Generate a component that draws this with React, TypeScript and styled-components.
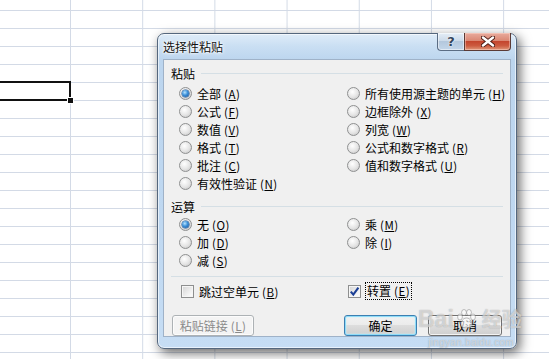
import styled, { createGlobalStyle } from "styled-components";

const GlobalStyle = createGlobalStyle`
    html, body {
        margin: 0;
        padding: 0;
        width: 549px;
        height: 359px;
        overflow: hidden;
    }
    body {
        font-family: "Noto Sans CJK SC", "Liberation Sans", sans-serif;
        font-size: 12px;
        color: #000;
    }
`;

const Sheet = styled.div`
    position: relative;
    width: 549px;
    height: 359px;
    background-color: #fff;
    background-image: linear-gradient(to bottom, #d3dae6 1px, transparent 1px),
        linear-gradient(to right, #d3dae6 1px, transparent 1px);
    background-size: 72.2px 18px;
    background-position: 70px 10px;
    overflow: hidden;
`;

const SelectedCell = styled.div`
    position: absolute;
    left: -3px;
    top: 81px;
    width: 74px;
    height: 20px;
    box-sizing: border-box;
    border: 2px solid #111;

    &::after {
        content: "";
        position: absolute;
        right: -5px;
        bottom: -5px;
        width: 5px;
        height: 5px;
        background: #111;
        border: 1px solid #fff;
    }
`;

const Dialog = styled.div`
    position: absolute;
    left: 157px;
    top: 33px;
    width: 360px;
    height: 316px;
    box-sizing: border-box;
    border: 1px solid #55677d;
    border-radius: 7px;
    background: linear-gradient(
        to bottom,
        #dfecf8 0,
        #cadff3 12px,
        #bcd5ee 26px,
        #bfd8f1 60%,
        #c6ddf4 100%
    );
    box-shadow: 3px 4px 12px rgba(0, 0, 0, 0.6), inset 0 0 0 1px rgba(255, 255, 255, 0.6);
    display: flex;
    flex-direction: column;
`;

const TitleBar = styled.div`
    height: 26px;
    display: flex;
    align-items: flex-start;
    padding-left: 5px;
`;

const Title = styled.div`
    line-height: 25px;
    font-size: 12px;
    color: #111;
    text-shadow: 0 0 5px #fff, 0 0 3px #fff, 0 0 2px #fff;
`;

const CaptionButtons = styled.div`
    margin-left: auto;
    margin-right: 5px;
    margin-top: -1px;
    display: flex;
`;

const HelpButton = styled.div`
    width: 27px;
    height: 18px;
    box-sizing: border-box;
    border: 1px solid #5b6d84;
    border-top: none;
    border-right: none;
    border-radius: 0 0 0 4px;
    background: linear-gradient(to bottom, #e4edf6 0, #cddbea 45%, #b4c8dd 50%, #c3d6ea 100%);
    box-shadow: inset 0 0 0 1px rgba(255, 255, 255, 0.5);
    display: flex;
    align-items: center;
    justify-content: center;
    font-family: "DejaVu Sans", sans-serif;
    font-weight: bold;
    font-size: 13px;
    color: #34465c;
    text-shadow: 0 0 2px #fff, 0 0 1px #fff;
`;

const CloseButton = styled.div`
    width: 47px;
    height: 18px;
    box-sizing: border-box;
    border: 1px solid #5b3a35;
    border-top: none;
    border-radius: 0 0 4px 0;
    background: linear-gradient(
        to bottom,
        #e9ab9d 0,
        #da8874 45%,
        #c4462e 50%,
        #cc5a3f 75%,
        #e09a7c 100%
    );
    box-shadow: inset 0 0 0 1px rgba(255, 220, 210, 0.45);
    display: flex;
    align-items: center;
    justify-content: center;
`;

const Content = styled.div`
    flex: 1;
    margin: 0 5px 11px 5px;
    border: 1px solid #9fb2c8;
    background: #f0f0f0;
    padding: 4px 7px 0 7px;
    display: flex;
    flex-direction: column;
`;

const GroupHeader = styled.div<{ $mt?: number }>`
    height: 18px;
    display: flex;
    align-items: center;
    margin-top: ${(p) => p.$mt ?? 0}px;
`;

const GroupLine = styled.div`
    flex: 1;
    height: 1px;
    margin-left: 6px;
    background: #d5dfe5;
`;

const OptionGrid = styled.div<{ $rows: number; $mt?: number }>`
    display: grid;
    grid-template-columns: 168px 1fr;
    grid-template-rows: repeat(${(p) => p.$rows}, 18px);
    grid-auto-flow: column;
    padding-left: 8px;
    margin-top: ${(p) => p.$mt ?? 0}px;
`;

const Option = styled.div`
    display: flex;
    align-items: center;
    gap: 5px;
    white-space: nowrap;
`;

const Radio = styled.span<{ $checked?: boolean }>`
    position: relative;
    width: 13px;
    height: 13px;
    box-sizing: border-box;
    border-radius: 50%;
    border: 1px solid #8f9091;
    background: radial-gradient(circle at 40% 35%, #ffffff 0, #e4e4e4 55%, #cfcfcf 80%, #eeeeee 100%);
    flex-shrink: 0;

    &::after {
        content: "";
        display: ${(p) => (p.$checked ? "block" : "none")};
        position: absolute;
        left: 2px;
        top: 2px;
        width: 7px;
        height: 7px;
        border-radius: 50%;
        background: radial-gradient(circle at 40% 35%, #b8e4ff 0, #3b8fd8 45%, #1a4f92 100%);
        box-shadow: 0 0 0 0.5px #1d4f88;
    }
`;

const Key = styled.span`
    font-size: 11.5px;
    margin-left: 3px;
    letter-spacing: 0.5px;

    u {
        text-underline-offset: 1px;
    }
`;

const Separator = styled.div`
    height: 1px;
    margin-top: 7px;
    background: #d5dfe5;
`;

const CheckGrid = styled.div`
    display: grid;
    grid-template-columns: 167px 1fr;
    height: 18px;
    margin-top: 5px;
    padding-left: 10px;
`;

const CheckBox = styled.span`
    width: 13px;
    height: 13px;
    box-sizing: border-box;
    border: 1px solid #8e8f8f;
    background: linear-gradient(135deg, #d4d4d4 0, #f4f4f4 70%, #ffffff 100%);
    box-shadow: inset 0 0 0 1px #f6f6f6;
    flex-shrink: 0;
    display: flex;
    align-items: center;
    justify-content: center;
`;

const FocusText = styled.span`
    outline: 1px dotted #000;
    outline-offset: 0;
    padding: 0 1px;
    line-height: 15px;
`;

const ButtonRow = styled.div`
    display: flex;
    justify-content: space-between;
    margin-top: 15px;
    padding: 0 1px;
`;

const ButtonGroup = styled.div`
    display: flex;
    gap: 11px;
`;

const PushButton = styled.div<{ $width: number; $variant?: "default" | "disabled" }>`
    width: ${(p) => p.$width}px;
    height: 21px;
    box-sizing: border-box;
    border-radius: 3px;
    display: flex;
    align-items: center;
    justify-content: center;
    font-size: 12px;
    border: 1px solid
        ${(p) =>
            p.$variant === "default" ? "#3c7fb1" : p.$variant === "disabled" ? "#adb2b5" : "#707070"};
    background: ${(p) =>
        p.$variant === "disabled"
            ? "#f4f4f4"
            : "linear-gradient(to bottom, #f2f2f2 0, #ebebeb 50%, #dddddd 50%, #cfcfcf 100%)"};
    box-shadow: ${(p) =>
        p.$variant === "default"
            ? "inset 0 0 0 1px #8fdcf8, inset 0 0 2px 1px #c5eefc"
            : "inset 0 0 0 1px rgba(255, 255, 255, 0.75)"};
    color: ${(p) => (p.$variant === "disabled" ? "#8a8a8a" : "#000")};
`;

const Watermark = styled.div`
    position: absolute;
    left: 418px;
    top: 307px;
    pointer-events: none;
    color: rgba(255, 255, 255, 0.55);
    text-shadow: 0 0 1px rgba(90, 90, 90, 0.55);
`;

const WatermarkMain = styled.div`
    display: flex;
    align-items: center;
    font-family: "Liberation Sans", sans-serif;
    font-weight: bold;
    font-size: 23px;
    line-height: 24px;
`;

const WatermarkCjk = styled.span`
    font-family: "Noto Sans CJK SC", sans-serif;
    font-size: 20px;
    margin-left: 4px;
`;

const WatermarkUrl = styled.div`
    font-family: "Liberation Sans", sans-serif;
    font-size: 10px;
    line-height: 11px;
    margin-left: 10px;
    margin-top: 6px;
    letter-spacing: 0.3px;
`;

type Item = { label: string; key: string; checked?: boolean };

const pasteItems: Item[] = [
    { label: "全部", key: "A", checked: true },
    { label: "公式", key: "F" },
    { label: "数值", key: "V" },
    { label: "格式", key: "T" },
    { label: "批注", key: "C" },
    { label: "有效性验证", key: "N" },
    { label: "所有使用源主题的单元", key: "H" },
    { label: "边框除外", key: "X" },
    { label: "列宽", key: "W" },
    { label: "公式和数字格式", key: "R" },
    { label: "值和数字格式", key: "U" },
];

const opItems: Item[] = [
    { label: "无", key: "O", checked: true },
    { label: "加", key: "D" },
    { label: "减", key: "S" },
    { label: "乘", key: "M" },
    { label: "除", key: "I" },
];

const Mnemonic = ({ k }: { k: string }) => (
    <Key>
        (<u>{k}</u>)
    </Key>
);

const Paw = () => (
    <svg width="22" height="22" viewBox="0 0 22 22" style={{ margin: "0 1px" }}>
        <g fill="rgba(255,255,255,0.6)" stroke="rgba(100,100,100,0.5)" strokeWidth="0.8">
            <ellipse cx="5" cy="9" rx="2.4" ry="3" />
            <ellipse cx="9" cy="4.5" rx="2.4" ry="3" />
            <ellipse cx="14" cy="4.5" rx="2.4" ry="3" />
            <ellipse cx="18" cy="9" rx="2.4" ry="3" />
            <path d="M11.5 10 C7 10 5 16 6.5 18.5 C8 20.5 10 19 11.5 19 C13 19 15 20.5 16.5 18.5 C18 16 16 10 11.5 10 Z" />
        </g>
    </svg>
);

const App = () => {
    return (
        <>
            <GlobalStyle />
            <Sheet>
                <SelectedCell />
                <Dialog>
                    <TitleBar>
                        <Title>选择性粘贴</Title>
                        <CaptionButtons>
                            <HelpButton>?</HelpButton>
                            <CloseButton>
                                <svg width="14" height="11" viewBox="0 0 14 11">
                                    <path
                                        d="M2 1.5 L12 9.5 M12 1.5 L2 9.5"
                                        stroke="#4a1c14"
                                        strokeWidth="4.2"
                                        strokeLinecap="round"
                                    />
                                    <path
                                        d="M2 1.5 L12 9.5 M12 1.5 L2 9.5"
                                        stroke="#fff"
                                        strokeWidth="2.4"
                                        strokeLinecap="round"
                                    />
                                </svg>
                            </CloseButton>
                        </CaptionButtons>
                    </TitleBar>
                    <Content>
                        <GroupHeader>
                            <span>粘贴</span>
                            <GroupLine />
                        </GroupHeader>
                        <OptionGrid $rows={6} $mt={2}>
                            {pasteItems.map((item) => (
                                <Option key={item.key}>
                                    <Radio $checked={item.checked} />
                                    <span>
                                        {item.label}
                                        <Mnemonic k={item.key} />
                                    </span>
                                </Option>
                            ))}
                        </OptionGrid>
                        <GroupHeader $mt={5}>
                            <span>运算</span>
                            <GroupLine />
                        </GroupHeader>
                        <OptionGrid $rows={3}>
                            {opItems.map((item) => (
                                <Option key={item.key}>
                                    <Radio $checked={item.checked} />
                                    <span>
                                        {item.label}
                                        <Mnemonic k={item.key} />
                                    </span>
                                </Option>
                            ))}
                        </OptionGrid>
                        <Separator />
                        <CheckGrid>
                            <Option>
                                <CheckBox />
                                <span>
                                    跳过空单元
                                    <Mnemonic k="B" />
                                </span>
                            </Option>
                            <Option>
                                <CheckBox>
                                    <svg width="11" height="11" viewBox="0 0 11 11">
                                        <path
                                            d="M1.8 5.6 L4.3 8.6 L9.4 1.6"
                                            fill="none"
                                            stroke="#1c3f95"
                                            strokeWidth="2.1"
                                        />
                                    </svg>
                                </CheckBox>
                                <FocusText>
                                    转置
                                    <Mnemonic k="E" />
                                </FocusText>
                            </Option>
                        </CheckGrid>
                        <ButtonRow>
                            <PushButton $width={82} $variant="disabled">
                                粘贴链接
                                <Mnemonic k="L" />
                            </PushButton>
                            <ButtonGroup>
                                <PushButton $width={73} $variant="default">
                                    确定
                                </PushButton>
                                <PushButton $width={74}>取消</PushButton>
                            </ButtonGroup>
                        </ButtonRow>
                    </Content>
                </Dialog>
                <Watermark>
                    <WatermarkMain>
                        Bai
                        <Paw />
                        <WatermarkCjk>经验</WatermarkCjk>
                    </WatermarkMain>
                    <WatermarkUrl>jingyan.baidu.com</WatermarkUrl>
                </Watermark>
            </Sheet>
        </>
    );
};

export default App;
